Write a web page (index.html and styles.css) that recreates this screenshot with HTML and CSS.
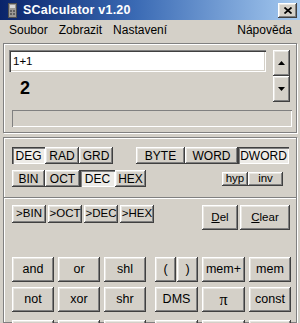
FILE: index.html
```html
<!DOCTYPE html>
<html>
<head>
<meta charset="utf-8">
<link rel="stylesheet" href="styles.css">
</head>
<body>
<div class="window">
  <div class="titlebar">
    <svg class="app-icon" viewBox="0 0 9 15" width="9" height="15">
      <rect x="0.5" y="0.5" width="8" height="14" fill="#9c9a96" stroke="#505050"/>
      <rect x="2" y="2" width="5" height="3" fill="#d8d8d8"/>
      <rect x="2" y="7" width="2" height="2" fill="#606060"/>
      <rect x="5" y="7" width="2" height="2" fill="#606060"/>
      <rect x="2" y="10" width="2" height="2" fill="#606060"/>
      <rect x="5" y="10" width="2" height="2" fill="#606060"/>
    </svg>
    <span class="title">SCalculator v1.20</span>
    <div class="close raised">
      <svg viewBox="0 0 8 7" width="8" height="7"><path d="M0.5 0.5L7.5 6.5M7.5 0.5L0.5 6.5" stroke="#000" stroke-width="1.7" fill="none"/></svg>
    </div>
  </div>
  <div class="menubar">
    <span class="menu-item">Soubor</span>
    <span class="menu-item">Zobrazit</span>
    <span class="menu-item">Nastavení</span>
    <span class="menu-item help">Nápověda</span>
  </div>

  <div class="panel display">
    <div class="display-row">
      <div class="display-main">
        <div class="input">1+1</div>
        <div class="result">2</div>
      </div>
      <div class="spin">
        <div class="spin-btn raised"><svg viewBox="0 0 7 4" width="7" height="4"><path d="M3.5 0L7 4H0z" fill="#000"/></svg></div>
        <div class="spin-btn raised"><svg viewBox="0 0 7 4" width="7" height="4"><path d="M0 0H7L3.5 4z" fill="#000"/></svg></div>
      </div>
    </div>
    <div class="status"></div>
  </div>

  <div class="panel keypad">
    <div class="row row-a">
      <div class="group">
        <div class="btn sunken w33">DEG</div>
        <div class="btn raised w34">RAD</div>
        <div class="btn raised w34">GRD</div>
      </div>
      <div class="group words">
        <div class="btn raised w49">BYTE</div>
        <div class="btn raised w53">WORD</div>
        <div class="btn sunken w51">DWORD</div>
      </div>
    </div>
    <div class="row row-b">
      <div class="group">
        <div class="btn raised w33">BIN</div>
        <div class="btn raised w35">OCT</div>
        <div class="btn sunken w35">DEC</div>
        <div class="btn raised w31">HEX</div>
      </div>
      <div class="group hypinv">
        <div class="btn raised w26 small">hyp</div>
        <div class="btn raised w35 small">inv</div>
      </div>
    </div>
    <div class="separator"></div>
    <div class="row row-c">
      <div class="group conv">
        <div class="btn raised conv-btn">&gt;BIN</div>
        <div class="btn raised conv-btn">&gt;OCT</div>
        <div class="btn raised conv-btn">&gt;DEC</div>
        <div class="btn raised conv-btn">&gt;HEX</div>
      </div>
      <div class="group edit">
        <div class="btn raised w36"><span class="ul">D</span>el</div>
        <div class="btn raised w50"><span class="ul">C</span>lear</div>
      </div>
    </div>
    <div class="keys">
      <div class="btn raised key">and</div>
      <div class="btn raised key">or</div>
      <div class="btn raised key">shl</div>
      <div class="key paren">
        <div class="btn raised">(</div>
        <div class="btn raised">)</div>
      </div>
      <div class="btn raised key">mem+</div>
      <div class="btn raised key">mem</div>

      <div class="btn raised key">not</div>
      <div class="btn raised key">xor</div>
      <div class="btn raised key">shr</div>
      <div class="btn raised key narrow">DMS</div>
      <div class="btn raised key pi">π</div>
      <div class="btn raised key">const</div>

      <div class="btn raised key last"></div>
      <div class="btn raised key last"></div>
      <div class="btn raised key last"></div>
      <div class="btn raised key narrow last"></div>
      <div class="btn raised key last"></div>
      <div class="btn raised key last"></div>
    </div>
  </div>
</div>
</body>
</html>
```

FILE: styles.css
```css
* { box-sizing: border-box; }
html, body { margin: 0; padding: 0; }
body {
  width: 300px;
  height: 323px;
  overflow: hidden;
  background: #d4d0c8;
  font-family: "Liberation Sans", Arial, sans-serif;
  font-size: 11px;
  color: #000;
}
.window {
  height: 323px;
  overflow: hidden;
}

.raised {
  background: #d4d0c8;
  box-shadow: inset -1px -1px #404040, inset 1px 1px #ffffff, inset -2px -2px #808080, inset 2px 2px #e8e6e1;
}
.sunken {
  background: #edebe7;
  box-shadow: inset 1px 1px #404040, inset 2px 2px #808080, inset -1px -1px #ffffff;
}

/* title bar */
.titlebar {
  height: 20px;
  display: flex;
  align-items: center;
  padding-left: 8px;
  background: linear-gradient(90deg, #0a246a 0%, #3a6ab4 45%, #a6caf0 100%);
}
.app-icon { flex: none; }
.title {
  color: #fff;
  font-weight: bold;
  font-size: 12.5px;
  margin-left: 6px;
  letter-spacing: 0.2px;
}
.close {
  margin-left: auto;
  margin-right: 3px;
  width: 19px;
  height: 15px;
  display: flex;
  align-items: center;
  justify-content: center;
}

/* menu */
.menubar {
  height: 19px;
  display: flex;
  align-items: center;
  padding: 0 8px 0 9px;
  font-size: 12px;
}
.menu-item { margin-right: 11px; }
.menu-item.help { margin-left: auto; margin-right: 0; }

/* panels */
.panel {
  margin: 4px 3px 0 3px;
  border: 1px solid #808080;
  box-shadow: inset 1px 1px #ffffff, 1px 1px #ffffff;
}
.display {
  height: 90px;
  padding: 6px 0 0 5px;
}
.display-row { display: flex; }
.display-main { width: 257px; }
.input {
  height: 22px;
  background: #fff;
  padding-left: 4px;
  line-height: 22px;
  font-size: 11.5px;
  box-shadow: inset 1px 1px #808080, inset 2px 2px #404040, inset -1px -1px #ffffff, inset -2px -2px #d4d0c8;
}
.result {
  margin: 6px 0 0 11px;
  font-size: 18px;
  font-weight: bold;
  line-height: 20px;
}
.spin {
  margin-left: 7px;
  width: 17px;
  display: flex;
  flex-direction: column;
}
.spin-btn {
  height: 26px;
  display: flex;
  align-items: center;
  justify-content: center;
}
.status {
  margin: 8px 0 0 3px;
  width: 280px;
  height: 17px;
  box-shadow: inset 1px 1px #808080, inset -1px -1px #ffffff;
}

.keypad {
  height: 186px;
  padding: 9px 0 0 8px;
}
.row { display: flex; }
.group { display: flex; }
.btn {
  display: flex;
  align-items: center;
  justify-content: center;
  font-size: 12px;
  line-height: 1;
}
.row-a .btn, .row-b .btn { height: 17px; }
.row-b { margin-top: 6px; }
.words { margin-left: 23px; }
.hypinv { margin-left: auto; margin-right: 13px; align-self: center; }
.row-b .btn.small { height: 14px; font-size: 11.5px; }

.w26 { width: 26px; }
.w31 { width: 31px; }
.w33 { width: 33px; }
.w34 { width: 34px; }
.w35 { width: 35px; }
.w36 { width: 36px; }
.w49 { width: 49px; }
.w50 { width: 50px; }
.w51 { width: 51px; }
.w53 { width: 53px; }

.separator {
  margin: 10px 0 0 -8px;
  height: 2px;
  border-top: 1px solid #808080;
  border-bottom: 1px solid #ffffff;
}
.row-c { margin-top: 6px; align-items: flex-start; }
.conv { gap: 2px; }
.conv-btn { width: 34px; height: 18px; font-size: 11.5px; }
.edit { margin-left: 48px; gap: 2px; }
.edit .btn { height: 25px; font-size: 11.5px; }
.ul { text-decoration: underline; }

.keys {
  margin-top: 27px;
  display: grid;
  grid-template-columns: 42px 42px 42px 48px 43px 42px;
  grid-auto-rows: 25px;
  column-gap: 4px;
  row-gap: 5px;
}
.key { font-size: 12.5px; }
.key.narrow { width: 43px; justify-self: end; }
.paren {
  width: 43px;
  justify-self: end;
  display: flex;
  gap: 1px;
}
.paren .btn { flex: 1; font-size: 12.5px; }
.pi { font-family: "Liberation Serif", "Times New Roman", serif; font-size: 16px; }
.key.last { margin-top: 3px; }
```
